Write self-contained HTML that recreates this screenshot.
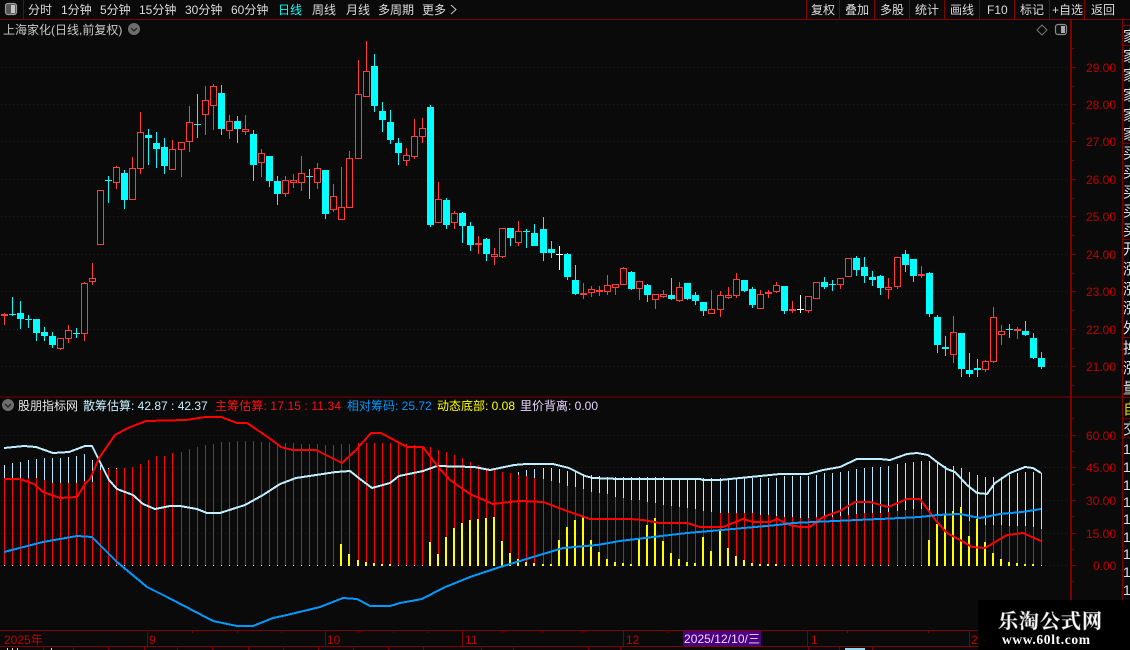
<!DOCTYPE html>
<html><head><meta charset="utf-8"><style>
html,body{margin:0;padding:0;background:#0a0a0a;width:1130px;height:650px;overflow:hidden}
svg{display:block;position:absolute;left:0;top:0}
text{font-family:"Liberation Sans","WenQuanYi Zen Hei","Noto Sans CJK SC",sans-serif;font-size:12px}
.t{fill:#dcdcdc}.a{fill:#c00000}
</style></head><body>
<svg width="1130" height="650" viewBox="0 0 1130 650" xmlns="http://www.w3.org/2000/svg">
<rect width="1130" height="650" fill="#0a0a0a"/>
<!-- grid -->
<g shape-rendering="crispEdges" stroke="#6e0000" stroke-dasharray="1 3" fill="none">
<path d="M1 67.5H1067M1 104.5H1067M1 141.5H1067M1 179.5H1067M1 216.5H1067M1 254.5H1067M1 291.5H1067M1 329.5H1067M1 366.5H1067M1 435.5H1067M1 467.5H1067M1 500.5H1067M1 533.5H1067M1 565.5H1067"/>
</g>
<!-- frame -->
<g shape-rendering="crispEdges" stroke="#800000" fill="none">
<path d="M0 19.5H1130M23.5 0V19M806.5 0V19M839.5 0V19M874.5 0V19M909.5 0V19M944.5 0V19M979.5 0V19M1014.5 0V19M1049.5 0V19M1084.5 0V19"/>
<path d="M0 397H1122" stroke-width="1"/>
<path d="M1122 25.5H1130M1122 45.5H1130M1122 143.5H1130M1122 239.5H1130M1122 337.5H1130M1122 397.5H1130M1122 418.5H1130M1122 437.5H1130"/>
<path d="M1122.5 19V600"/>
<path d="M1071 19V646" stroke-width="2"/>
<path d="M0 630.5H1122M0 646.5H1130M147.5 630V646M325.5 630V646M462.5 630V646M623.5 630V646M807.5 630V646M969.5 630V646"/>
<path d="M192.5 630V633M237.5 630V633M281.5 630V633M358.5 630V633M393.5 630V633M427.5 630V633M502.5 630V633M542.5 630V633M582.5 630V633M668.5 630V633M847.5 630V633M928.5 630V633"/>
<path d="M43.5 646V650M73.5 646V650M108.5 646V650M144.5 646V650M177.5 646V650M212.5 646V650M248.5 646V650M283.5 646V650M318.5 646V650M353.5 646V650M388.5 646V650M423.5 646V650M481.5 646V650M513.5 646V650M588.5 646V650M620.5 646V650M808.5 646V650M839.5 646V650M872.5 646V650"/>
<path d="M1071 67.5h5M1071 104.5h5M1071 141.5h5M1071 179.5h5M1071 216.5h5M1071 254.5h5M1071 291.5h5M1071 329.5h5M1071 366.5h5M1071 435.5h5M1071 467.5h5M1071 500.5h5M1071 533.5h5M1071 565.5h5"/>
<path d="M1071 86.5h3M1071 123.5h3M1071 160.5h3M1071 198.5h3M1071 235.5h3M1071 273.5h3M1071 310.5h3M1071 348.5h3M1071 385.5h3M1071 48.5h3M1071 451.5h3M1071 484.5h3M1071 516.5h3M1071 549.5h3M1071 581.5h3M1071 418.5h3"/>
</g>
<!-- toolbar icon -->
<rect x="5.500" y="3.500" width="11" height="11" rx="2.500" fill="#555" stroke="#9a9a9a" stroke-width="1.200"/><rect x="11" y="5" width="4" height="8" fill="#c4c4c4"/>
<rect x="1055.500" y="24.500" width="11" height="10" rx="2.500" fill="#111" stroke="#8a8a8a" stroke-width="1.200"/><rect x="1061" y="26" width="4" height="7" fill="#aaa"/>
<path d="M1042 25l5 5-5 5-5-5z" fill="none" stroke="#777"/>
<!-- toolbar text -->
<g class="t">
<text class="t" x="28" y="14">分时</text><text class="t" x="61" y="14">1分钟</text><text class="t" x="100" y="14">5分钟</text><text class="t" x="139" y="14">15分钟</text><text class="t" x="185" y="14">30分钟</text><text class="t" x="231" y="14">60分钟</text>
<text x="278" y="14" fill="#00ffff">日线</text>
<text class="t" x="312" y="14">周线</text><text class="t" x="346" y="14">月线</text><text class="t" x="378" y="14">多周期</text><text class="t" x="422" y="14">更多</text>
<path d="M451 5l5 4.500-5 4.500" fill="none" stroke="#c8c8c8"/>
<text class="t" x="811" y="14">复权</text><text class="t" x="845" y="14">叠加</text><text class="t" x="880" y="14">多股</text><text class="t" x="915" y="14">统计</text><text class="t" x="950" y="14">画线</text><text class="t" x="987" y="14">F10</text><text class="t" x="1020" y="14">标记</text><text class="t" x="1052" y="14">+自选</text><text class="t" x="1091" y="14">返回</text>
</g>
<text x="3" y="34" fill="#c8c8c8">上海家化(日线,前复权)</text>
<circle cx="134" cy="29" r="6" fill="#6e6e6e"/><path d="M131 28l3 3 3-3" fill="none" stroke="#222" stroke-width="1.300"/>
<!-- price axis labels -->
<g>
<text class="a" x="1086" y="72">29.00</text><text class="a" x="1086" y="109">28.00</text><text class="a" x="1086" y="146">27.00</text><text class="a" x="1086" y="184">26.00</text><text class="a" x="1086" y="221">25.00</text><text class="a" x="1086" y="259">24.00</text><text class="a" x="1086" y="296">23.00</text><text class="a" x="1086" y="334">22.00</text><text class="a" x="1086" y="371">21.00</text>
<text class="a" x="1086" y="440">60.00</text><text class="a" x="1086" y="472">45.00</text><text class="a" x="1086" y="505">30.00</text><text class="a" x="1086" y="538">15.00</text><text class="a" x="1093" y="570">0.00</text>
</g>
<!-- candles -->
<g shape-rendering="crispEdges">
<path fill="none" stroke="#ff3c3c" d="M4.5 313V325M60.500 338V350M68.500 325V343M84.500 282V341M92.500 263V285M116.500 166V189M132.500 157V200M140.500 112V174M172.500 140V170M181.500 142V177M189.500 106V152M205.500 86V135M213.500 84V130M229.500 115V139M245.500 115V135M261.500 149V177M285.500 176V197M293.500 174V188M301.500 156V191M317.500 163V189M333.500 184V212M341.500 167V220M349.500 151V208M358.500 60V159M366.500 41V97M406.500 148V166M414.500 119V159M422.500 118V143M438.500 182V223M454.500 211V229M478.500 236V254M494.500 248V265M502.500 228V258M518.500 221V246M583.500 283V299M591.500 286V297M599.500 286V296M607.500 275V295M615.500 284V295M623.500 267V285M639.500 281V300M655.500 294V309M663.500 290V298M679.500 282V302M711.500 290V314M720.500 291V317M728.500 287V299M736.500 273V298M760.500 290V309M768.500 290V298M776.500 282V293M792.500 301V313M808.500 296V313M816.500 282V299M840.500 278V289M848.500 258V277M888.500 278V299M897.500 257V289M921.500 266V278M953.500 316V363M985.500 360V372M993.500 307V363M1001.500 325V345M1017.500 327V339"/>
<path fill="#0a0a0a" stroke="#ff3c3c" d="M1.500 314.500h6V315.500h-6zM57.500 338.500h6V348.500h-6zM65.500 330.500h6V338.500h-6zM81.500 283.500h6V333.500h-6zM89.500 278.500h6V281.500h-6zM97.500 190.500h6V244.500h-6zM113.500 167.500h6V182.500h-6zM129.500 168.500h6V199.500h-6zM137.500 132.500h6V168.500h-6zM169.500 149.500h6V169.500h-6zM178.500 142.500h6V149.500h-6zM186.500 122.500h6V141.500h-6zM202.500 100.500h6V114.500h-6zM210.500 86.500h6V105.500h-6zM226.500 121.500h6V130.500h-6zM242.500 129.500h6V131.500h-6zM258.500 153.500h6V162.500h-6zM282.500 180.500h6V193.500h-6zM290.500 180.500h6V182.500h-6zM298.500 173.500h6V182.500h-6zM314.500 168.500h6V182.500h-6zM330.500 196.500h6V209.500h-6zM338.500 207.500h6V219.500h-6zM346.500 158.500h6V207.500h-6zM355.500 94.500h6V158.500h-6zM363.500 71.500h6V96.500h-6zM403.500 155.500h6V160.500h-6zM411.500 136.500h6V156.500h-6zM419.500 128.500h6V136.500h-6zM435.500 199.500h6V222.500h-6zM451.500 213.500h6V222.500h-6zM475.500 243.500h6V244.500h-6zM491.500 254.500h6V256.500h-6zM499.500 228.500h6V256.500h-6zM515.500 231.500h6V242.500h-6zM580.500 293.500h6V294.500h-6zM588.500 289.500h6V292.500h-6zM596.500 290.500h6V291.500h-6zM604.500 285.500h6V291.500h-6zM612.500 284.500h6V287.500h-6zM620.500 268.500h6V284.500h-6zM636.500 281.500h6V288.500h-6zM652.500 294.500h6V299.500h-6zM660.500 294.500h6V296.500h-6zM676.500 287.500h6V300.500h-6zM708.500 309.500h6V313.500h-6zM717.500 295.500h6V309.500h-6zM725.500 295.500h6V297.500h-6zM733.500 279.500h6V295.500h-6zM757.500 294.500h6V308.500h-6zM765.500 292.500h6V293.500h-6zM773.500 285.500h6V291.500h-6zM789.500 309.500h6V310.500h-6zM805.500 296.500h6V310.500h-6zM813.500 282.500h6V298.500h-6zM837.500 278.500h6V284.500h-6zM845.500 258.500h6V276.500h-6zM885.500 287.500h6V289.500h-6zM894.500 257.500h6V286.500h-6zM918.500 274.500h6V275.500h-6zM950.500 332.500h6V354.500h-6zM982.500 361.500h6V369.500h-6zM990.500 317.500h6V361.500h-6zM998.500 331.500h6V334.500h-6zM1014.500 329.500h6V330.500h-6z"/>
<path fill="none" stroke="#00ffff" d="M12.500 297V316M20.500 301V329M28.500 315V328M36.500 319V341M44.500 327V341M52.500 332V348M76.500 328V338M108.500 176V203M124.500 170V209M148.500 129V165M156.500 132V168M164.500 138V174M197.500 94V138M221.500 85V135M237.500 116V143M253.500 130V181M269.500 156V187M277.500 176V205M309.500 169V199M325.500 170V219M374.500 54V112M382.500 102V132M390.500 110V144M398.500 138V165M430.500 105V227M446.500 198V229M462.500 212V243M470.500 222V251M486.500 238V261M510.500 228V246M526.500 229V248M534.500 224V246M543.500 217V261M551.500 241V258M567.500 253V280M575.500 265V295M631.500 271V290M647.500 284V302M671.500 278V300M687.500 283V300M695.500 292V305M703.500 302V316M744.500 280V292M752.500 287V308M784.500 286V314M824.500 277V289M832.500 280V291M856.500 256V276M864.500 257V283M872.500 271V286M880.500 275V295M905.500 250V272M913.500 259V282M929.500 272V317M937.500 315V353M945.500 336V356M961.500 333V377M969.500 353V377M977.500 359V377M1009.500 324V338M1025.500 321V336M1033.500 333V359M1041.500 352V369"/>
<path fill="#00ffff" d="M9 314h7v1h-7zM17 313h7v6h-7zM25 319h7v1h-7zM33 319h7v14h-7zM41 332h7v4h-7zM49 336h7v9h-7zM73 333h7v1h-7zM105 180h7v1h-7zM121 173h7v27h-7zM145 135h7v3h-7zM153 143h7v6h-7zM161 147h7v19h-7zM194 124h7v1h-7zM218 93h7v36h-7zM234 121h7v8h-7zM250 134h7v31h-7zM266 156h7v25h-7zM274 181h7v13h-7zM306 176h7v1h-7zM322 170h7v44h-7zM371 66h7v40h-7zM379 111h7v9h-7zM387 122h7v18h-7zM395 143h7v10h-7zM427 107h7v118h-7zM443 200h7v25h-7zM459 213h7v13h-7zM467 226h7v19h-7zM483 239h7v15h-7zM507 228h7v10h-7zM523 231h7v1h-7zM531 233h7v13h-7zM540 229h7v24h-7zM548 249h7v4h-7zM564 254h7v23h-7zM572 280h7v14h-7zM628 272h7v17h-7zM644 285h7v10h-7zM668 295h7v4h-7zM684 283h7v16h-7zM692 295h7v6h-7zM700 302h7v9h-7zM741 280h7v11h-7zM749 289h7v16h-7zM781 286h7v25h-7zM821 282h7v5h-7zM829 284h7v1h-7zM853 258h7v12h-7zM861 267h7v9h-7zM869 277h7v3h-7zM877 276h7v12h-7zM902 254h7v11h-7zM910 259h7v17h-7zM926 273h7v41h-7zM934 317h7v28h-7zM942 347h7v2h-7zM958 333h7v36h-7zM966 370h7v4h-7zM974 368h7v2h-7zM1006 329h7v1h-7zM1022 331h7v4h-7zM1030 338h7v20h-7zM1038 358h7v9h-7z"/>
<path fill="none" stroke="#ffffff" d="M559.500 246V270M556 254.500h7M800.500 295V313M797 309.500h7"/>
</g>
<!-- histogram -->
<g shape-rendering="crispEdges" fill="none">
<path stroke="#b8e8ff" d="M4.500 465V566M12.500 463V566M20.500 462V566M28.500 460V566M36.500 459V566M44.500 458V566M52.500 458V566M60.500 458V566M68.500 457V566M76.500 456V566M84.500 454V566M92.500 460V566M100.500 465V566M108.500 468V566M116.500 468V566M124.500 468V566M132.500 467V566M140.500 464V566M148.500 460V566M156.500 456V566M164.500 456V566M172.500 453V566M181.500 452V566M189.500 449V566M197.500 447V566M205.500 445V566M213.500 444V566M221.500 442V566M229.500 442V566M237.500 441V566M245.500 441V566M253.500 441V566M261.500 442V566M269.500 442V566M277.500 443V566M285.500 443V566M293.500 443V566M301.500 444V566M309.500 444V566M317.500 444V566M325.500 445V566M333.500 445V566M341.500 444V566M349.500 444V566M358.500 443V566M366.500 443V566M374.500 443V566M382.500 443V566M390.500 443V566M398.500 443V566M406.500 444V566M414.500 445V566M422.500 446V566M430.500 447V566M438.500 450V566M446.500 452V566M454.500 455V566M462.500 458V566M470.500 462V566M478.500 465V566M486.500 468V566M494.500 470V566M502.500 472V566M510.500 473V566M518.500 472V566M526.500 470V566M534.500 469V566M543.500 468V566M551.500 468V566M559.500 469V566M567.500 471V566M575.500 472V566M583.500 474V566M591.500 475V566M599.500 476V566M607.500 477V566M615.500 477V566M623.500 477V566M631.500 477V566M639.500 477V566M647.500 477V566M655.500 477V566M663.500 477V566M671.500 478V566M679.500 478V566M687.500 478V566M695.500 478V566M703.500 478V566M711.500 478V566M720.500 478V566M728.500 478V566M736.500 478V566M744.500 478V566M752.500 478V566M760.500 478V566M768.500 478V566M776.500 478V566M784.500 476V566M792.500 476V566M800.500 476V566M808.500 476V566M816.500 475V566M824.500 473V566M832.500 473V566M840.500 472V566M848.500 471V566M856.500 469V566M864.500 468V566M872.500 467V566M880.500 467V566M888.500 466V566M897.500 464V566M905.500 463V566M913.500 462V566M921.500 461V566M929.500 461V566M937.500 463V566M945.500 466V566M953.500 466V566M961.500 468V566M969.500 472V566M977.500 475V566M985.500 477V566M993.500 477V566M1001.500 477V566M1009.500 475V566M1017.500 473V566M1025.500 472V566M1033.500 472V566M1041.500 473V566"/>
<path stroke="#ff0000" d="M4.500 478V565M12.500 478V565M20.500 478V565M28.500 478V565M36.500 478V565M44.500 480V565M52.500 483V565M60.500 483V565M68.500 483V565M76.500 483V565M84.500 481V565M92.500 482V565M100.500 470V565M108.500 469V565M116.500 469V565M124.500 468V565M132.500 467V565M140.500 464V565M148.500 460V565M156.500 456V565M164.500 456V565M172.500 453V565M181.500 452V565M189.500 449V565M197.500 447V565M205.500 445V565M213.500 444V565M221.500 442V565M229.500 442V565M237.500 441V565M245.500 441V565M253.500 441V565M261.500 442V565M269.500 442V565M277.500 443V565M285.500 443V565M293.500 443V565M301.500 444V565M309.500 444V565M317.500 444V565M325.500 445V565M333.500 445V565M341.500 444V565M349.500 444V565M358.500 443V565M366.500 443V565M374.500 443V565M382.500 443V565M390.500 443V565M398.500 443V565M406.500 444V565M414.500 445V565M422.500 446V565M430.500 447V565M438.500 450V565M446.500 452V565M454.500 455V565M462.500 458V565M470.500 462V565M478.500 465V565M486.500 468V565M494.500 470V565M502.500 472V565M510.500 473V565M518.500 475V565M526.500 476V565M534.500 478V565M543.500 479V565M551.500 481V565M559.500 483V565M567.500 486V565M575.500 487V565M583.500 489V565M591.500 492V565M599.500 493V565M607.500 494V565M615.500 497V565M623.500 498V565M631.500 500V565M639.500 500V565M647.500 502V565M655.500 503V565M663.500 505V565M671.500 506V565M679.500 507V565M687.500 508V565M695.500 509V565M703.500 511V565M711.500 512V565M720.500 513V565M728.500 513V565M736.500 513V565M744.500 513V565M752.500 513V565M760.500 515V565M768.500 515V565M776.500 516V565M784.500 517V565M792.500 517V565M800.500 518V565M808.500 518V565M816.500 517V565M824.500 517V565M832.500 517V565M840.500 516V565M848.500 515V565M856.500 514V565M864.500 513V565M872.500 513V565M880.500 513V565M888.500 512V565M897.500 511V565M905.500 510V565M913.500 509V565M921.500 509V565M929.500 513V565M937.500 515V565M945.500 517V565M953.500 518V565M961.500 519V565M969.500 521V565M977.500 523V565M985.500 525V565M993.500 525V565M1001.500 525V565M1009.500 526V565M1017.500 526V565M1025.500 526V565M1033.500 527V565M1041.500 529V565"/>
<path stroke="#ffff00" stroke-width="2" d="M341 544V566M349 554V566M358 560V566M366 562V566M374 563V566M382 564V566M390 564V566M430 542V566M438 554V566M446 537V566M454 528V566M462 523V566M470 520V566M478 519V566M486 518V566M494 517V566M502 541V566M510 553V566M518 559V566M526 562V566M534 563V566M543 564V566M551 564V566M559 540V566M567 527V566M575 520V566M583 516V566M591 540V566M599 552V566M607 559V566M615 562V566M623 563V566M631 564V566M639 538V566M647 525V566M655 518V566M663 541V566M671 553V566M679 559V566M687 562V566M695 563V566M703 537V566M711 551V566M720 530V566M728 548V566M736 556V566M744 560V566M752 563V566M760 564V566M768 564V566M776 564V566M929 540V566M937 524V566M945 515V566M953 511V566M961 507V566M969 536V566M977 519V566M985 542V566M993 553V566M1001 559V566M1009 562V566M1017 563V566M1025 564V566M1033 564V566"/>
<polyline stroke="#c0f0ff" stroke-width="2" points="4,448 24,446 36,447 53,453 69,452 85,446 92,446 99,460 109,480 117,489 133,495 143,504 155,509 170,506 180,506 197,509 207,513 220,513 245,505 263,495 280,484 296,478 336,472 350,471 360,479 372,488 390,483 399,476 423,471 437,466 474,467 490,470 514,465 526,464 553,464 569,468 585,476 593,478 620,479 700,479 703,480 720,480 740,478 760,476 780,474 808,474 823,470 840,467 857,459 880,459 890,460 907,454 917,453 928,455 937,462 947,469 955,472 967,485 977,493 987,494 995,483 1010,473 1025,467 1033,468 1041,473"/>
<polyline stroke="#ff0000" stroke-width="2" points="4,479 20,479 34,484 43,492 60,498 77,497 85,484 90,479 99,458 115,435 128,428 146,421 186,420 205,417 221,417 237,423 247,423 269,438 281,447 292,450 316,450 342,463 356,450 371,433 381,433 407,447 423,447 439,468 450,480 470,494 493,504 510,502 520,501 543,502 567,511 590,519 620,519 630,519 643,520 660,523 687,523 700,527 723,527 743,519 753,522 770,522 777,519 790,525 800,527 810,527 823,517 840,511 855,502 870,502 888,507 907,499 920,499 937,522 947,533 960,540 972,547 985,548 1007,535 1023,533 1041,541"/>
<polyline stroke="#0099ff" stroke-width="2" points="4,552 43,542 77,536 92,537 117,562 147,587 167,597 213,621 237,626 253,626 273,618 287,615 320,607 343,598 357,599 370,606 390,606 400,603 422,599 443,588 470,577 497,568 533,557 563,548 597,545 620,541 653,537 687,533 733,529 777,525 793,523 813,522 857,520 880,519 920,517 937,515 960,514 980,518 1000,514 1022,512 1041,509"/>
</g>
<!-- indicator title -->
<circle cx="8" cy="405" r="6" fill="#6e6e6e"/><path d="M5 404l3 3 3-3" fill="none" stroke="#222" stroke-width="1.300"/>
<text x="18" y="410" fill="#e6e6e6">股朋指标网</text>
<text x="83" y="410" fill="#c8f0ff">散筹估算: 42.87 : 42.37</text>
<text x="215" y="410" fill="#ff1010" textLength="126">主筹估算: 17.15 : 11.34</text>
<text x="347" y="410" fill="#0099ff">相对筹码: 25.72</text>
<text x="437" y="410" fill="#ffff00">动态底部: 0.08</text>
<text x="520" y="410" fill="#e8d4ff">里价背离: 0.00</text>
<!-- time axis -->
<text class="a" x="4" y="644">2025年</text><text class="a" x="149" y="644">9</text><text class="a" x="327" y="644">10</text><text class="a" x="465" y="644">11</text><text class="a" x="626" y="644">12</text><text class="a" x="811" y="644">1</text><text class="a" x="971" y="644">2</text>
<rect x="683" y="631" width="78" height="15" fill="#4b0082"/>
<text x="684" y="643" fill="#ecdcff" textLength="76">2025/12/10/三</text>
<path d="M7 648h1v2h-1zM12 648h1v2h-1zM17 648h1v2h-1zM51 648h1v2h-1z" fill="#ddd"/>
<path d="M845 648h20v2h-20z" fill="#8fd8e8"/>
<!-- right column -->
<g>
<text x="1123" y="41" style="font-size:15px" fill="#e0e0e0">家</text>
<text x="1123" y="61" style="font-size:15px" fill="#e0e0e0">家</text><text x="1123" y="80" style="font-size:15px" fill="#e0e0e0">家</text><text x="1123" y="100" style="font-size:15px" fill="#e0e0e0">家</text><text x="1123" y="120" style="font-size:15px" fill="#e0e0e0">家</text><text x="1123" y="139" style="font-size:15px" fill="#e0e0e0">家</text>
<text x="1123" y="158" style="font-size:15px" fill="#e0e0e0">买</text><text x="1123" y="177" style="font-size:15px" fill="#e0e0e0">买</text><text x="1123" y="197" style="font-size:15px" fill="#e0e0e0">买</text><text x="1123" y="216" style="font-size:15px" fill="#e0e0e0">买</text><text x="1123" y="235" style="font-size:15px" fill="#e0e0e0">买</text>
<text x="1123" y="254" style="font-size:15px" fill="#e0e0e0">开</text><text x="1123" y="274" style="font-size:15px" fill="#e0e0e0">涨</text><text x="1123" y="294" style="font-size:15px" fill="#e0e0e0">涨</text><text x="1123" y="313" style="font-size:15px" fill="#e0e0e0">涨</text><text x="1123" y="333" style="font-size:15px" fill="#e0e0e0">外</text>
<text x="1123" y="353" style="font-size:15px" fill="#e0e0e0">换</text><text x="1123" y="373" style="font-size:15px" fill="#e0e0e0">涨</text><text x="1123" y="393" style="font-size:15px" fill="#e0e0e0">量</text>
<text x="1123" y="414" style="font-size:15px" fill="#d8d800">自</text><text x="1123" y="434" style="font-size:15px" fill="#e0e0e0">交</text>
<text x="1123" y="454" style="font-size:14px" fill="#e0e0e0">1</text><text x="1123" y="472" style="font-size:14px" fill="#e0e0e0">1</text><text x="1123" y="490" style="font-size:14px" fill="#e0e0e0">1</text><text x="1123" y="507" style="font-size:14px" fill="#e0e0e0">1</text><text x="1123" y="524" style="font-size:14px" fill="#e0e0e0">1</text><text x="1123" y="542" style="font-size:14px" fill="#e0e0e0">1</text><text x="1123" y="559" style="font-size:14px" fill="#e0e0e0">1</text><text x="1123" y="577" style="font-size:14px" fill="#e0e0e0">1</text><text x="1123" y="595" style="font-size:14px" fill="#e0e0e0">1</text>
</g>
<!-- logo -->
<rect x="978" y="600" width="152" height="50" fill="#000"/>
<text x="998" y="628" fill="#fff" stroke="#999" stroke-width="0.500" textLength="104" style="font-family:'Noto Serif CJK SC','Liberation Serif',serif;font-size:20px;font-weight:700">乐淘公式网</text>
<text x="1002" y="644" fill="#fff" textLength="88" style="font-family:'Liberation Serif',serif;font-size:13.500px;font-weight:700">www.60lt.com</text>
</svg>
</body></html>
